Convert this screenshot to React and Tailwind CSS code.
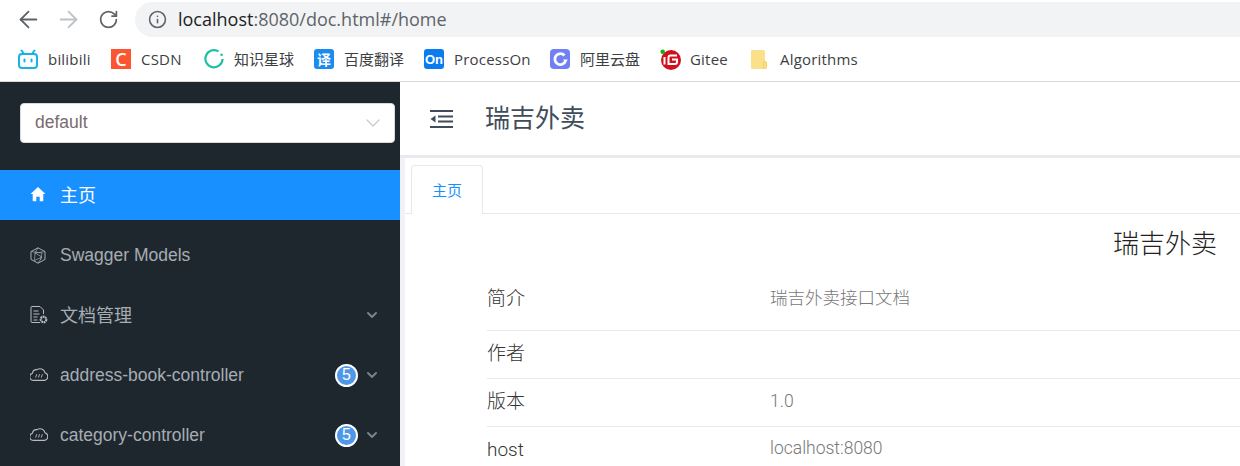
import { ArrowLeft, ArrowRight, RotateCw, Info, ChevronDown } from "lucide-react";

const SANS = "font-['Liberation_Sans','Noto_Sans_CJK_SC',sans-serif]";

// --- browser bookmark icons ---
const BiliIcon = () => (
  <svg width="20" height="20" viewBox="0 0 20 20" fill="none">
    <rect x="1" y="5" width="18" height="14" rx="3" stroke="#14b4e6" strokeWidth="2" />
    <path d="M6 5L3.500 1.500M14 5l2.500-3.500" stroke="#14b4e6" strokeWidth="2" strokeLinecap="round" />
    <path d="M6.500 10.500v2M13.500 10.500v2" stroke="#14b4e6" strokeWidth="2" strokeLinecap="round" />
  </svg>
);

const CsdnIcon = () => (
  <div className="flex h-5 w-5 items-center justify-center bg-[#fc5531] font-['Open_Sans',sans-serif] text-[18px] font-semibold leading-none text-white">
    C
  </div>
);

const StarIcon = () => (
  <svg width="20" height="20" viewBox="0 0 20 20" fill="none">
    <path d="M14.500 2.400A8.600 8.600 0 1 0 18.600 10" stroke="#1fbf9f" strokeWidth="2.200" />
    <circle cx="17.600" cy="5.800" r="1.300" fill="#1fbf9f" />
  </svg>
);

const BaiduIcon = () => (
  <div className="flex h-5 w-5 items-center justify-center rounded-[3px] bg-[#1a8cf0] font-['Noto_Sans_CJK_SC',sans-serif] text-[14px] font-bold leading-none text-white">
    译
  </div>
);

const OnIcon = () => (
  <div className="flex h-5 w-5 items-center justify-center rounded-[3px] bg-[#0a7cf0] font-['Liberation_Sans',sans-serif] text-[13px] font-bold leading-none text-white">
    On
  </div>
);

const AliIcon = () => (
  <svg width="20" height="20" viewBox="0 0 20 20" fill="none">
    <rect width="20" height="20" rx="4" fill="#7280f5" />
    <path d="M15.500 12A5.500 5.500 0 1 1 14.500 6.500" stroke="#fff" strokeWidth="2.800" />
    <path d="M13 10.500h5l-2.500 3z" fill="#fff" />
  </svg>
);

const GiteeIcon = () => (
  <svg width="21" height="21" viewBox="0 0 21 21" fill="none">
    <circle cx="11" cy="11" r="10" fill="#d0101c" />
    <path d="M17 6.500h-6.500a2 2 0 0 0-2 2v6.500h6.500a2 2 0 0 0 2-2v-2.500h-5" stroke="#fff" strokeWidth="2" />
    <path d="M4.500 8v7.500" stroke="#fff" strokeWidth="2" />
    <circle cx="2.700" cy="2.700" r="2.300" fill="#0fb30f" />
  </svg>
);

const FolderIcon = () => (
  <svg width="16" height="19" viewBox="0 0 16 19" fill="none">
    <path d="M1 0h11a2 2 0 0 1 2 2v17H1a1 1 0 0 1-1-1V1a1 1 0 0 1 1-1z" fill="#fbe08a" />
    <rect x="12.500" y="11.500" width="3" height="7" rx="1.500" fill="#fbe08a" stroke="#f3cf6a" />
  </svg>
);

// --- sidebar icons ---
const HomeIcon = () => (
  <svg width="16" height="16" viewBox="0 0 16 16" fill="#fff">
    <path d="M8 1L0.500 8h2.200v6.500a.8.800 0 0 0 .8.800h2.800v-4.500h3.400v4.500h2.800a.8.800 0 0 0 .8-.8V8h2.200z" />
  </svg>
);

const ModelsIcon = () => (
  <svg width="16" height="17" viewBox="0 0 16 17" fill="none" stroke="#a6adb4" strokeWidth="1">
    <path d="M8 .800l7 3.800v7.800l-7 3.800-7-3.800V4.600z" />
    <path d="M8 .800L5 6l7 4-4 6.200M1 4.600L12 6l-1.500 7M15 4.600L5 6l-.500 7.500L12 10" strokeWidth=".7" />
  </svg>
);

const DocIcon = () => (
  <svg width="18" height="18" viewBox="0 0 18 18" fill="none" stroke="#b5bbc1" strokeWidth="1">
    <path d="M10 16.500H2a1 1 0 0 1-1-1v-14a1 1 0 0 1 1-1h8l3.500 3.500V8" />
    <path d="M3.500 5h5M3.500 8h6M3.500 11h4M3.500 14h4" />
    <circle cx="13.500" cy="13.500" r="2.800" strokeWidth="2.200" strokeDasharray="1.800 .6" />
  </svg>
);

const CloudIcon = () => (
  <svg width="18" height="14" viewBox="1 2 16 11.500" fill="none" stroke="#b5bbc1" strokeWidth="1">
    <path d="M4 12.500a3.200 3.200 0 0 1-.8-6.300A3.800 3.800 0 0 1 7.200 3 4.600 4.600 0 0 1 14.300 5.700a3.500 3.500 0 0 1-.3 6.800z" />
    <path d="M6 10l1-3M8.500 10l1-3M11 10l1-3" strokeWidth=".8" />
  </svg>
);

const CollapseIcon = () => (
  <svg width="24" height="18" viewBox="0 0 24 18" fill="#3f4d5a">
    <rect x="0" y="0" width="23" height="2" />
    <rect x="8" y="5.500" width="15" height="2" />
    <rect x="8" y="10.500" width="15" height="2" />
    <rect x="0" y="16" width="23" height="2" />
    <path d="M5.500 5.500v7L0.500 9z" />
  </svg>
);

const bookmarks = [
  { icon: <BiliIcon />, label: "bilibili", w: "w-[93px]", gap: "gap-[10px]", track: "tracking-[0.2px]" },
  { icon: <CsdnIcon />, label: "CSDN", w: "w-[93px]", gap: "gap-[10px]", track: "tracking-[0.2px]" },
  { icon: <StarIcon />, label: "知识星球", w: "w-[110px]", gap: "gap-[10px]", track: "" },
  { icon: <BaiduIcon />, label: "百度翻译", w: "w-[110px]", gap: "gap-[10px]", track: "" },
  { icon: <OnIcon />, label: "ProcessOn", w: "w-[126px]", gap: "gap-[10px]", track: "tracking-[0.2px]" },
  { icon: <AliIcon />, label: "阿里云盘", w: "w-[110px]", gap: "gap-[10px]", track: "" },
  { icon: <GiteeIcon />, label: "Gitee", w: "w-[91px]", gap: "gap-[9px]", track: "tracking-[0.2px]" },
  { icon: <FolderIcon />, label: "Algorithms", w: "w-auto", gap: "gap-[13px]", track: "tracking-[0.2px]" },
];

const BrowserBar = () => (
  <header className="h-[82px] border-b border-[#dadada] bg-white font-['Open_Sans','Noto_Sans_CJK_SC',sans-serif]">
    <div className="flex h-[37px] items-center pt-px">
      <div className="flex w-[135px] items-center pl-[8px]">
        <span className="flex w-[40px] justify-center">
          <ArrowLeft size={27} color="#5f6368" strokeWidth={1.6} />
        </span>
        <span className="flex w-[40px] justify-center">
          <ArrowRight size={27} color="#bdc1c6" strokeWidth={1.6} />
        </span>
        <span className="flex w-[40px] justify-center">
          <RotateCw size={21} color="#5f6368" strokeWidth={2} />
        </span>
      </div>
      <div className="flex h-[35px] flex-1 items-center rounded-l-full bg-[#f1f3f4] pl-[13px] text-[18px]">
        <Info size={19} color="#5f6368" strokeWidth={2} />
        <span className="ml-[11px] text-[#202124]">localhost</span>
        <span className="text-[#5f6368]">:8080/doc.html#/home</span>
      </div>
    </div>
    <nav className="flex h-[44px] items-center pl-[18px] text-[15px] text-[#3c4043]">
      {bookmarks.map((b) => (
        <div key={b.label} className={`flex items-center ${b.w} ${b.gap}`}>
          {b.icon}
          <span className={b.track}>{b.label}</span>
        </div>
      ))}
    </nav>
  </header>
);

const Badge = () => (
  <span className="flex h-[23px] w-[23px] items-center justify-center rounded-full border-2 border-white bg-[#4f97e8] text-[16px] text-white">
    5
  </span>
);

const SideItem = ({ icon, label, badge, chevron }) => (
  <div className="flex h-[60px] items-center pl-[30px] pr-[20px] text-[17.5px] text-[#a6adb4]">
    <span className="flex w-[30px] shrink-0 items-center">{icon}</span>
    <span className="flex-1">{label}</span>
    {badge && <Badge />}
    {chevron && <ChevronDown size={16} color="#7a8087" strokeWidth={3} className="ml-[6px]" />}
  </div>
);

const Sidebar = () => (
  <aside className={`flex w-[400px] shrink-0 flex-col bg-[#1f272e] ${SANS}`}>
    <div className="pl-[20px] pr-[5px] pt-[21px]">
      <div className="flex h-[40px] items-center justify-between rounded-[4px] border border-[#d9d9d9] bg-white pl-[14px] pr-[9px] text-[17.5px] text-[#7a6a6f]">
        <span className="pb-[2px]">default</span>
        <ChevronDown size={24} color="#c8c8c8" strokeWidth={1.2} />
      </div>
    </div>
    <div className="mt-[27px] flex h-[50px] items-center bg-[#1890ff] pb-[2px] pl-[30px] text-[16px] text-white">
      <span className="flex w-[30px] items-center">
        <HomeIcon />
      </span>
      <span className="font-['Noto_Sans_CJK_SC',sans-serif] text-[18px]">主页</span>
    </div>
    <div className="mt-[5px]">
      <SideItem icon={<ModelsIcon />} label="Swagger Models" />
      <SideItem
        icon={<DocIcon />}
        label={<span className="block pb-[2px] font-['Noto_Sans_CJK_SC',sans-serif] text-[18px]">文档管理</span>}
        chevron
      />
      <SideItem icon={<CloudIcon />} label="address-book-controller" badge chevron />
      <SideItem icon={<CloudIcon />} label="category-controller" badge chevron />
    </div>
  </aside>
);

const infoRows = [
  { label: "简介", value: "瑞吉外卖接口文档", h: "h-[70px] pt-[8px]" },
  { label: "作者", value: "", h: "h-[48px]" },
  { label: "版本", value: "1.0", h: "h-[48px]" },
  { label: "host", value: "localhost:8080", h: "h-[46px]" },
];

const MainPanel = () => (
  <main className={`min-w-0 flex-1 overflow-hidden bg-white ${SANS}`}>
    <div className="flex h-[76px] items-center border-b-[3px] border-[#e8eaee] pl-[30px]">
      <CollapseIcon />
      <h1 className="ml-[31px] pb-[4px] font-['Noto_Sans_CJK_SC',sans-serif] text-[25px] text-[#3f4d5a]">瑞吉外卖</h1>
    </div>
    <div className="flex">
      <div className="w-[5px] shrink-0 self-stretch bg-[#f0f2f5]" />
      <div className="min-w-0 flex-1">
        <div className="flex h-[56px] items-end border-b border-[#e8e8e8] pl-[6px]">
          <div className="-mb-px flex h-[49px] w-[72px] items-center justify-center rounded-t-[4px] border border-b-0 border-[#e8e8e8] bg-white font-['Noto_Sans_CJK_SC',sans-serif] text-[15px] text-[#1890ff]">
            主页
          </div>
        </div>
        <div className="flex h-[47px] items-end justify-end pr-[23px] font-['Noto_Sans_CJK_SC',sans-serif] text-[26px] font-light leading-[38px] text-[#222]">
          瑞吉外卖
        </div>
        <div className="pl-[82px] font-['Roboto','Noto_Sans_CJK_SC',sans-serif]">
          {infoRows.map((r, i) => (
            <div
              key={r.label}
              className={`flex ${r.h} items-center ${i < infoRows.length - 1 ? "border-b border-[#e8e8e8]" : ""}`}
            >
              <span className="w-[283px] text-[19px] font-light text-[#333]">{r.label}</span>
              <span className="pb-[3px] text-[17.5px] font-light text-[#777]">{r.value}</span>
            </div>
          ))}
        </div>
      </div>
    </div>
  </main>
);

export default function App() {
  return (
    <div className="flex h-[466px] w-[1240px] flex-col overflow-hidden bg-white">
      <BrowserBar />
      <div className="flex min-h-0 flex-1">
        <Sidebar />
        <MainPanel />
      </div>
    </div>
  );
}
